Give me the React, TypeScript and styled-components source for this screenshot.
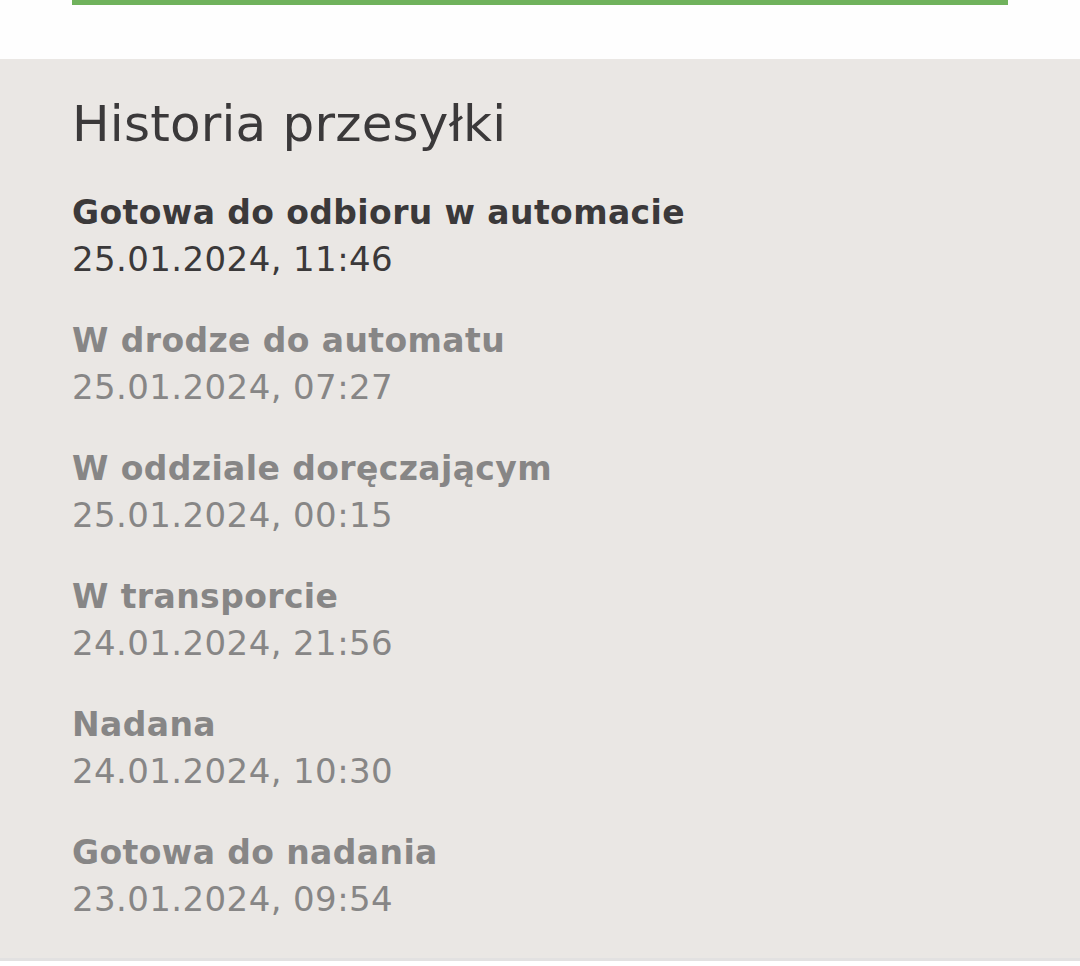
import styled, { createGlobalStyle } from "styled-components"

const Global = createGlobalStyle`
    html, body {
        margin: 0;
        padding: 0;
        background: #ffffff;
        font-family: "DejaVu Sans", "Liberation Sans", sans-serif;
    }
`

const Top = styled.div`
    height: 59px;
    background: #fefefe;
    padding: 0 72px;
`

const ProgressBar = styled.div`
    height: 5px;
    background: #70b25c;
`

const Section = styled.section`
    background: #eae7e4;
    padding: 40px 72px 40px;
    height: 902px;
    box-sizing: border-box;
    border-bottom: 3px solid #e2e1e1;
`

const Title = styled.h2`
    margin: 0 0 40px;
    font-size: 50px;
    line-height: 50px;
    font-weight: 400;
    color: #3b393a;
    letter-spacing: 0.2px;
`

const List = styled.div`
    display: flex;
    flex-direction: column;
    gap: 34px;
`

const Entry = styled.div<{ $active?: boolean }>`
    color: ${p => (p.$active ? "#3b393a" : "#878686")};
`

const Status = styled.div`
    font-size: 33px;
    font-weight: 700;
    line-height: 47px;
    letter-spacing: 0.4px;
`

const Date = styled.div`
    font-size: 34px;
    line-height: 47px;
    letter-spacing: 0.4px;
`

const history = [
    { status: "Gotowa do odbioru w automacie", date: "25.01.2024, 11:46" },
    { status: "W drodze do automatu", date: "25.01.2024, 07:27" },
    { status: "W oddziale doręczającym", date: "25.01.2024, 00:15" },
    { status: "W transporcie", date: "24.01.2024, 21:56" },
    { status: "Nadana", date: "24.01.2024, 10:30" },
    { status: "Gotowa do nadania", date: "23.01.2024, 09:54" },
]

const App = () => {
    return <>
        <Global />
        <Top>
            <ProgressBar />
        </Top>
        <Section>
            <Title>Historia przesyłki</Title>
            <List>
                {history.map((h, i) => <Entry key={`entry-${i}`} $active={i === 0}>
                    <Status>{h.status}</Status>
                    <Date>{h.date}</Date>
                </Entry>)}
            </List>
        </Section>
    </>
}

export default App
